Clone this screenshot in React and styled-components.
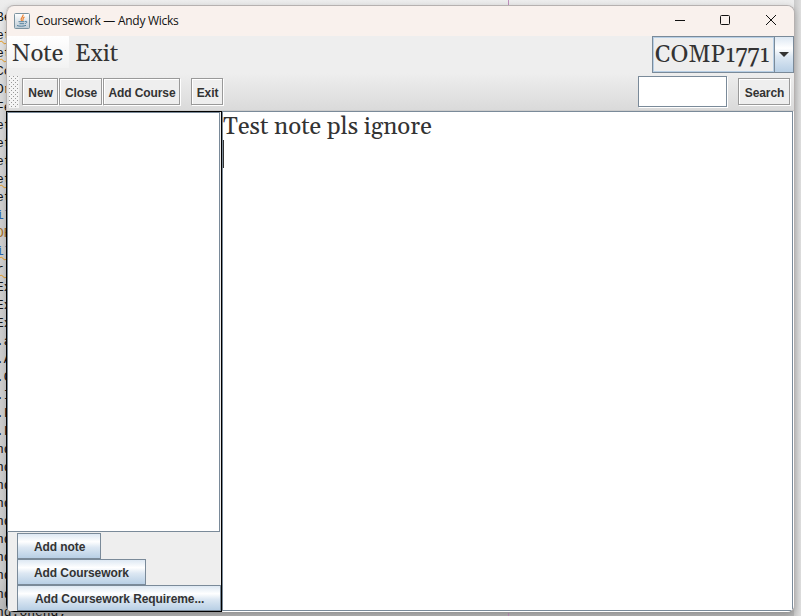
import React from "react";
import styled, { createGlobalStyle } from "styled-components";

const GlobalStyle = createGlobalStyle`
  * { box-sizing: border-box; }
  body { margin: 0; overflow: hidden; background: #d4d4d4; }
`;

const serif = `Georgia, Gelasio, "Liberation Serif", serif`;
const sans = `"Liberation Sans", Arial, sans-serif`;

const Desktop = styled.div`
  position: relative;
  width: 801px;
  height: 616px;
  padding: 5px 6px 3px 6px;
  overflow: hidden;
  background: linear-gradient(#ededed 0, #dedede 60px, #cfcfcf 200px, #cdcdcd 580px, #b5b5b5 616px);
`;

const EditorCode = styled.div`
  position: absolute;
  left: 0;
  top: 9px;
  width: 70px;
  font: 13px/18.03px "Liberation Mono", monospace;
  color: #111;
`;

const CodeLine = styled.div`
  height: 18.03px;
  margin-left: -4px;
  white-space: pre;
  color: ${(p) => p.$color || "#111"};
  text-decoration: ${(p) => (p.$wavy ? "underline wavy #e79a1a 1px" : "none")};
  text-decoration-skip-ink: none;
`;

const MarginLine = styled.div`
  position: absolute;
  left: 508px;
  top: 0;
  width: 1px;
  height: 616px;
  background: #c08fbd;
`;

const EditorEdge = styled.div`
  position: absolute;
  left: 794px;
  top: 0;
  width: 7px;
  height: 616px;
  background: linear-gradient(90deg, #cacaca, #dedede);
`;

const Window = styled.main`
  position: relative;
  display: flex;
  flex-direction: column;
  width: 789px;
  height: 608px;
  border: 1px solid #b6b1b0;
  border-bottom-color: #999;
  border-left-width: 0;
  border-radius: 8px;
  overflow: hidden;
  background: #eee;
  box-shadow: 0 2px 6px rgba(0, 0, 0, 0.2);
`;

const TitleBar = styled.header`
  display: flex;
  align-items: center;
  flex: 0 0 30px;
  padding-left: 7px;
  border-left: 1px solid #b6b1b0;
  border-top-left-radius: 8px;
  background: #f9f1ed;
`;

const Title = styled.h1`
  flex: 1;
  margin: -2px 0 0 6px;
  font: 12px "Open Sans", sans-serif;
  letter-spacing: -0.27px;
  color: #111;
`;

const WindowControls = styled.div`
  display: flex;
  width: 137px;
  height: 30px;
`;

const ControlButton = styled.button`
  width: 45.6px;
  height: 30px;
  padding: 0 0 2px;
  border: 0;
  background: none;
  svg { display: block; margin: auto; }
`;

const MenuBar = styled.nav`
  display: flex;
  flex: 0 0 37px;
  border-left: 1px solid #b6b1b0;
  background: #eee;
`;

const MenuItem = styled.button`
  width: ${(p) => p.$width}px;
  height: 32px;
  padding: 1px 0 0 ${(p) => p.$inset}px;
  border: 0;
  text-align: left;
  background: ${(p) => (p.$active ? "linear-gradient(#fff, #f2f2f2)" : "none")};
  font: 24px/34px ${serif};
  color: #333;
`;

const ComboBox = styled.div`
  display: flex;
  width: 142px;
  height: 37px;
  margin-left: auto;
  border: 1px solid #7a8a99;
`;

const ComboValue = styled.span`
  flex: 1;
  border: 1px solid #b8cfe5;
  padding-left: 1px;
  font: 24px/34px ${serif};
  font-variant-numeric: oldstyle-nums;
  color: #333;
  white-space: nowrap;
`;

const ComboArrow = styled.button`
  display: grid;
  place-items: center;
  width: 19px;
  padding: 0;
  border: 0;
  border-left: 1px solid #7a8a99;
  background: linear-gradient(#dde8f3 0, #fff 32%, #dde8f3 55%, #b8cfe5 100%);
`;

const ToolBar = styled.div`
  display: flex;
  align-items: center;
  flex: 0 0 38px;
  padding: 0 4px 0 2px;
  border-left: 1px solid #b6b1b0;
  background: linear-gradient(#eee, #dadada);
  border-bottom: 1px solid #ccc;
`;

const Grip = styled.div`
  width: 10px;
  height: 32px;
  margin-right: 3px;
  background-color: #f4f4f4;
  background-image: conic-gradient(from 270deg at 1px 1px, #999 90deg, transparent 0),
    conic-gradient(from 270deg at 1px 1px, #999 90deg, transparent 0);
  background-size: 4px 4px;
  background-position: 0 0, 2px 2px;
`;

const ToolButton = styled.button`
  width: ${(p) => p.$width}px;
  height: 27px;
  margin-left: ${(p) => p.$gap || 0}px;
  padding: 3px 0 0 1px;
  border: 1px solid #999;
  box-shadow: inset 1px 1px #fff, 1px 1px #fff;
  background: #eee;
  font: bold 12px ${sans};
  letter-spacing: -0.1px;
  color: #333;
  white-space: nowrap;
`;

const SearchField = styled.input`
  width: 89px;
  height: 31px;
  margin-left: auto;
  padding: 2px 4px;
  border: 1px solid #7a8a99;
  border-radius: 0;
  outline: 0;
  background: #fff;
  box-shadow: 1px 1px #fff;
  font: 12px ${sans};
`;

const SplitView = styled.div`
  display: grid;
  grid-template-columns: 216px 1fr;
  flex: 1;
  min-height: 0;
`;

const Sidebar = styled.aside`
  display: flex;
  flex-direction: column;
  border: 1px solid #000;
  box-shadow: inset 1px 0 #536579;
  background: #eee;
`;

const NoteList = styled.div`
  flex: 0 0 420px;
  margin-right: 1px;
  border: 1px solid #7a8a99;
  background: #fff;
`;

const Actions = styled.div`
  display: flex;
  flex-direction: column;
  align-items: flex-start;
  padding: 1px 0 0 10px;
`;

const ActionButton = styled.button`
  width: ${(p) => p.$width}px;
  height: 26px;
  padding: 1px 0 0 ${(p) => p.$inset || 16}px;
  border: 1px solid #7a8a99;
  text-align: left;
  background: linear-gradient(#dde8f3 0, #fff 32%, #dde8f3 55%, #b8cfe5 100%);
  font: bold 12px ${sans};
  letter-spacing: -0.08px;
  color: #333;
  white-space: nowrap;
`;

const Editor = styled.section`
  margin: 0 1px 1px 0;
  border: 1px solid #7a8a99;
  background: #fff;
  box-shadow: 1px 1px #fff;
`;

const NoteText = styled.p`
  margin: 0;
  height: 28px;
  font: 24px/31px ${serif};
  letter-spacing: 0.03px;
  color: #333;
  white-space: nowrap;
`;

const Caret = styled.div`
  width: 1px;
  height: 28px;
  background: #333;
`;

const codeLines = [
  ["Be"], ["et", 1], ["et", 1], ["Co"], ["Or"], ["Fe"], ["et"], ["et"], ["et"],
  ["et", 1], ["et"], ["il", 0, "#2863ad"], ["OR", 0, "#a46c23"], ["il", 1, "#2863ad"],
  ["r ", 1], ["Ex"], ["Ex"], ["Ex"], [".a"], [".A"], [".C"], [".I"], [".L"], [".L"],
  ["nd"], ["nd"], ["nd"], ["nd"], ["nd"], ["nd"], ["nd"], ["nd"], ["nd"], ["nd.onend;"],
];

function JavaIcon() {
  return (
    <svg width="16" height="16" viewBox="0 0 16 16" fill="none">
      <defs>
        <linearGradient id="tile" x1="0" y1="0" x2="0" y2="1">
          <stop stopColor="#fff" />
          <stop offset="1" stopColor="#bdcbd5" />
        </linearGradient>
      </defs>
      <rect x=".5" y=".5" width="15" height="15" rx="1" fill="url(#tile)" stroke="#7b929f" />
      <path d="M9 1.5C10 4 5.5 4.5 7.5 8M10.5 4C8 5.2 9.8 6 8.6 8" stroke="#ee8130" strokeWidth="1.2" />
      <path d="M4.5 8.7h6M5.5 10.7h4.5M3 12.5c2 1 7 .9 9-.2M11 8.5c3-1 2 2-.2 2" stroke="#537f9c" />
    </svg>
  );
}

export default function App() {
  return (
    <>
      <GlobalStyle />
      <Desktop>
        <EditorCode aria-hidden="true">
          {codeLines.map(([text, wavy, color], i) => (
            <CodeLine key={i} $wavy={wavy} $color={color}>{text}</CodeLine>
          ))}
        </EditorCode>
        <MarginLine />
        <EditorEdge />
        <Window>
          <TitleBar>
            <JavaIcon />
            <Title>Coursework — Andy Wicks</Title>
            <WindowControls>
              <ControlButton aria-label="Minimize">
                <svg width="12" height="12"><path d="M1 6.5h10" stroke="#111" /></svg>
              </ControlButton>
              <ControlButton aria-label="Maximize">
                <svg width="12" height="12"><rect x="1.5" y="1.5" width="9" height="9" rx="1" fill="none" stroke="#111" /></svg>
              </ControlButton>
              <ControlButton aria-label="Close window">
                <svg width="12" height="12"><path d="m1 1 10 10M11 1 1 11" stroke="#111" /></svg>
              </ControlButton>
            </WindowControls>
          </TitleBar>
          <MenuBar>
            <MenuItem $active $width={62} $inset={5}>Note</MenuItem>
            <MenuItem $width={60} $inset={6}>Exit</MenuItem>
            <ComboBox>
              <ComboValue>COMP1771</ComboValue>
              <ComboArrow aria-label="Choose course">
                <svg width="10" height="5"><path d="M0 0h10L5 5z" fill="#333" /></svg>
              </ComboArrow>
            </ComboBox>
          </MenuBar>
          <ToolBar>
            <Grip />
            <ToolButton $width={36}>New</ToolButton>
            <ToolButton $width={43} $gap={1}>Close</ToolButton>
            <ToolButton $width={77} $gap={1}>Add Course</ToolButton>
            <ToolButton $width={32} $gap={11}>Exit</ToolButton>
            <SearchField aria-label="Search notes" />
            <ToolButton $width={52} $gap={11}>Search</ToolButton>
          </ToolBar>
          <SplitView>
            <Sidebar>
              <NoteList />
              <Actions>
                <ActionButton $width={84}>Add note</ActionButton>
                <ActionButton $width={129}>Add Coursework</ActionButton>
                <ActionButton $width={204} $inset={17}>Add Coursework Requireme...</ActionButton>
              </Actions>
            </Sidebar>
            <Editor>
              <NoteText>Test note pls ignore</NoteText>
              <Caret />
            </Editor>
          </SplitView>
        </Window>
      </Desktop>
    </>
  );
}
